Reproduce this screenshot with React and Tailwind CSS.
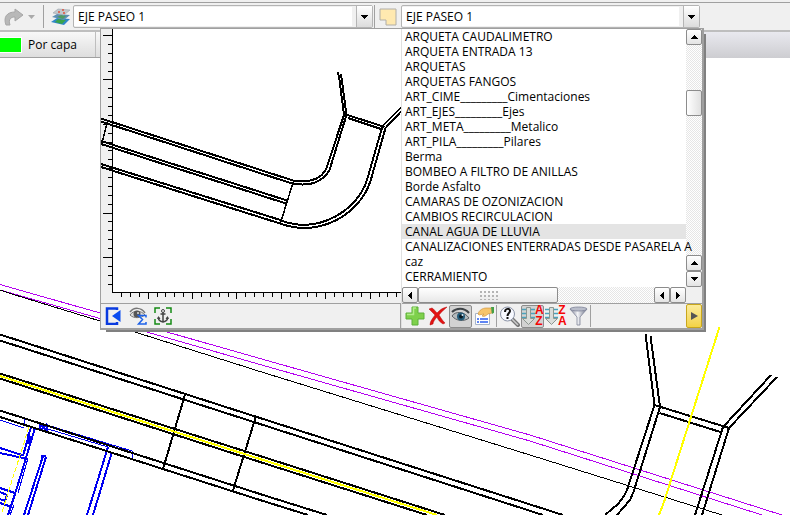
import { useState } from "react";

const LAYERS = [
  "ARQUETA CAUDALIMETRO",
  "ARQUETA ENTRADA 13",
  "ARQUETAS",
  "ARQUETAS FANGOS",
  "ART_CIME_________Cimentaciones",
  "ART_EJES_________Ejes",
  "ART_META_________Metalico",
  "ART_PILA_________Pilares",
  "Berma",
  "BOMBEO A FILTRO DE ANILLAS",
  "Borde Asfalto",
  "CAMARAS DE OZONIZACION",
  "CAMBIOS RECIRCULACION",
  "CANAL AGUA DE LLUVIA",
  "CANALIZACIONES ENTERRADAS DESDE PASARELA A",
  "caz",
  "CERRAMIENTO",
];

const V_TICKS = Array.from({ length: 29 }, (_, i) => ({ at: Math.round(35 + i * 8.88), major: i % 5 === 0 }));
const H_TICKS = Array.from({ length: 32 }, (_, i) => ({ at: Math.round(121 + i * 8.88), major: i % 5 === 3 }));

/* ===== ICONS ===== */
function Arrow({ dir }) {
  const d = {
    up: "M3 0h1v1h1v1h1v1h1v1H0V3h1V2h1V1h1z",
    down: "M0 0h7v1H6v1H5v1H4v1H3V3H2V2H1V1H0z",
    left: "M0 3h1V2h1V1h1V0h1v7H3V6H2V5H1V4H0z",
    right: "M0 0h1v1h1v1h1v1h1v1H3v1H2v1H1v1H0z",
  }[dir];
  const flat = dir === "up" || dir === "down";
  return (
    <svg width={flat ? 7 : 4} height={flat ? 4 : 7} shapeRendering="crispEdges" aria-hidden="true">
      <path d={d} />
    </svg>
  );
}

function RedoIcon() {
  return (
    <svg width="20" height="18" aria-hidden="true">
      <path d="M2 17C-1 9 3 4 11 4V1l8 6-8 6V9C7 9 4 11 6 17z" fill="#b8b8b8" stroke="#a6a6a6" />
    </svg>
  );
}

function LayersIcon() {
  return (
    <svg width="20" height="18" aria-hidden="true">
      <path d="M0 14l6-4 13 1-6 6z" fill="#2e86c8" />
      <path d="M4 14l3-3 8 1-4 4z" fill="#3aa34a" />
      <path d="M1 9l5-3 13 1-6 5z" fill="#5d8fb4" />
      <path d="M6 9l4-2 5 1-3 3z" fill="#4e9c62" />
      <path d="M2 5l5-4 12 1-6 5z" fill="#c2c7cc" stroke="#9aa4ad" strokeWidth=".6" />
      <path d="M7 4h2M11 2h2M12 5h2" stroke="#e0523c" strokeWidth="1.5" />
    </svg>
  );
}

function LayerShapeIcon() {
  return (
    <svg width="18" height="18" aria-hidden="true">
      <path d="M1 1h16v16H7v-5H1z" fill="#ffe9b0" stroke="#b0aea8" />
    </svg>
  );
}

function DockIcon() {
  return (
    <svg width="17" height="18" aria-hidden="true">
      <path d="M12 3V1.500H2v15.500h10v-2" fill="none" stroke="#0a3be0" strokeWidth="2.500" />
      <path d="M15.500 3v12L7 9z" fill="#0a4cf0" />
    </svg>
  );
}

function EyeSumIcon() {
  return (
    <svg width="18" height="18" aria-hidden="true">
      <path d="M1 5C5 0 12 0 16 6" fill="none" stroke="#777" strokeWidth="1.500" />
      <path d="M1 8C4 3 12 3 16 8C12 11 5 12 1 8z" fill="#ddd" stroke="#777" />
      <circle cx="8" cy="7" r="3.500" fill="#555" />
      <circle cx="9" cy="6" r="1" fill="#ddd" />
      <path d="M17 10.500V8.500H9.500l4 4-4 4.500H17v-2" fill="none" stroke="#1d62e8" strokeWidth="1.500" />
    </svg>
  );
}

function AnchorIcon() {
  return (
    <svg width="18" height="18" aria-hidden="true">
      <path d="M6 1H1v5M12 1h5v5M6 17H1v-5M12 17h5v-5" fill="none" stroke="#158a15" strokeWidth="1.500" />
      <circle cx="9" cy="4" r="1.500" fill="none" stroke="#444" />
      <path d="M9 5.500V15M6.500 7h5M4.500 10v1c0 2 2 3.500 4.500 4 2.500-.5 4.500-2 4.500-4v-1" fill="none" stroke="#444" strokeWidth="1.500" />
      <path d="M3 12l1.500-3 2 3zM11.500 12l2-3 1.500 3z" fill="#444" />
    </svg>
  );
}

function PlusIcon() {
  return (
    <svg width="20" height="20" aria-hidden="true">
      <path d="M7 1h6v6h6v6h-6v6H7v-6H1V7h6z" fill="#7ed04b" stroke="#5cb03a" strokeLinejoin="round" />
      <path d="M2 8.500h6.500V2H11" fill="none" stroke="#b2ec8b" strokeWidth="1.500" />
    </svg>
  );
}

function CrossIcon() {
  return (
    <svg width="20" height="20" aria-hidden="true">
      <path d="M1 3l3-1c2 1 3 3 5 5 3-3 5-5 10-6-3 3-6 5-8 8 2 3 3 5 6 8l-2 1c-3-2-5-4-6-7-2 2-4 5-4 7l-3 1c0-4 3-7 5-10C5 7 3 5 1 3z" fill="#e31212" stroke="#b00808" strokeWidth=".5" />
    </svg>
  );
}

function EyeIcon() {
  return (
    <svg width="19" height="18" aria-hidden="true">
      <path d="M1 5C5 1 13 0 18 6" fill="none" stroke="#3e4347" strokeWidth="2" />
      <path d="M1 9C4 4 13 4 18 11C13 15 5 14 1 9z" fill="#b4babd" stroke="#5b6064" />
      <circle cx="10" cy="9.500" r="4" fill="#235a78" />
      <circle cx="10" cy="9.500" r="2" fill="#0b1820" />
      <circle cx="11.500" cy="8" r="1" fill="#d8eaf4" />
    </svg>
  );
}

function PropertiesIcon() {
  return (
    <svg width="22" height="20" aria-hidden="true">
      <path d="M2.500 7.500h14v11h-14z" fill="#fff" stroke="#a7b4c8" />
      <path d="M4 13h2M4 16h2M7 13h8M7 16h8" stroke="#2b5df0" strokeWidth="1.500" />
      <path d="M5 8c1-4 5-6 8-6l5 0 1 5-4 1c-2 2-4 3-6 2l2-2-5 1z" fill="#f6c56c" stroke="#c98f3a" strokeWidth=".6" />
      <path d="M18 1l3 0 1 5-3 2z" fill="#46a046" />
    </svg>
  );
}

function FindIcon() {
  return (
    <svg width="22" height="21" aria-hidden="true">
      <path d="M13 13l6 6" stroke="#777" strokeWidth="4" strokeLinecap="round" />
      <path d="M13 13l6 6" stroke="#ccc" strokeWidth="1.500" />
      <circle cx="8.500" cy="8" r="7" fill="#f7f9ff" stroke="#8b93a6" />
      <path d="M6 6c0-4 5-4 5-1 0 2-2.500 2-2.500 5" fill="none" stroke="#111" strokeWidth="2" />
      <path d="M7.500 11h2v2h-2z" fill="#111" />
    </svg>
  );
}

function SortIcon({ top, bottom }) {
  return (
    <span className="flex h-5 items-center">
      <svg width="13" height="20" aria-hidden="true">
        <path d="M0 3.500h13M0 7.500h13M0 11.500h13" stroke="#4aa3bd" strokeWidth="1.500" />
        <path d="M4.500 1.500h4v11h4l-6 6-6-6h4z" fill="#d9dcd9" stroke="#8d9690" />
      </svg>
      <span className="flex w-2 flex-col font-['Liberation_Sans',sans-serif] text-[12px] leading-[11px] font-bold text-[#f50505]">
        <span>{top}</span>
        <span>{bottom}</span>
      </span>
    </span>
  );
}

function FilterIcon() {
  return (
    <svg width="20" height="20" aria-hidden="true">
      <defs>
        <linearGradient id="steel">
          <stop offset="0" stopColor="#777c90" />
          <stop offset=".45" stopColor="#f4f5f8" />
          <stop offset="1" stopColor="#686e84" />
        </linearGradient>
      </defs>
      <path d="M1 3l7 8v8h3v-8l7-8z" fill="url(#steel)" stroke="#7d8398" strokeWidth=".8" />
      <ellipse cx="9.500" cy="3" rx="8.500" ry="2" fill="#b9bdca" stroke="#7d8398" strokeWidth=".8" />
    </svg>
  );
}

/* ===== DRAWINGS ===== */
function PlanDrawing() {
  return (
    <svg className="absolute inset-0 h-full w-full" fill="none" shapeRendering="crispEdges" aria-hidden="true">
      <g stroke="#b400f0">
        <path d="M0 284.500L260 358.500L530 435L782 515" />
        <path d="M0 290L100 318.500L260 364.500L530 441L762 515" />
      </g>
      <path d="M0 290L20 296.500L100 321L260 371.500L530 455L722 515" stroke="#000" />

      <g stroke="#0000f0">
        <path d="M0 420L24 428M24 424v-6l108 33v7M48 429L108 447M28 458L18 493M14 505l-4 10" />
        <path strokeWidth="2" d="M31 427L23 456M35 428L26 458L15 494L8 515M31 436l-5 8 5-3M27 434l4 9M0 448L22 455M0 453L28 459M40 424l7 7M47 424l-7 7M40 425v6M47 425v6" />
        <path strokeWidth="2" d="M41 456h5M43 456L24 515M46 457L28 515M108 447L87 515M112 452L93 515" />
        <path strokeWidth="2" d="M0 488L15 493M0 492L7 495L5 501L0 499M0 503L12 507" />
      </g>
      <path d="M29 427L2 512" stroke="#ff0" strokeDasharray="5 2" />

      <g stroke="#000" strokeWidth="2">
        <path d="M0 334.500L260 418L563 515M0 340.500L260 424L543 515" />
        <path d="M0 373.500L260 456L445 515M0 378.500L260 462L427 515" />
        <path d="M0 410.500L260 494L327 515M0 417L260 500L308 515" />
        <path d="M185.500 393L163 469M256 416L232.500 492" />
        <path d="M645.500 334L654.500 405L627 490L624 496L618 504L605 515" />
        <path d="M650.500 336L660 407L633.500 492L630 500L617 515" />
        <path d="M654.500 405L729 428M659.500 413L722 432.500" />
        <path d="M771 375L723 427L695 515M777 377L729 428L702 515" />
      </g>
      <path d="M0 376L260 459L437 515M719.500 327L664 502L659 515" stroke="#ff0" strokeWidth="2" />
    </svg>
  );
}

function PreviewDrawing() {
  return (
    <svg className="block h-[274px] w-full" shapeRendering="crispEdges" fill="none" role="img" aria-label="Vista previa">
      <g transform="translate(-101 -29)">
        <path d="M101 29h11v274h-11z" fill="#f0f0f0" />
        <path d="M112 293h300v10H112z" fill="#f0f0f0" />
        <g stroke="#000" strokeWidth="2">
          <path d="M101 118.500L293 180.500M101 121.500L292 183.500" />
          <path d="M101 141L287 200.500M101 144L286 203.500" />
          <path d="M101 164L282 220.500M101 167L280 223.500" />
          <path d="M338 72L339.500 80L344 115L326.500 168C322 178 313 183 293 180.500" />
          <path d="M341 74L346.500 115L329.500 170C323 181 311 187 292 183.500" />
          <path d="M346 114.500L384.500 127M348 118L382.500 129.500" />
          <path d="M401 107.500L382.500 126L367 180C358 209 320 235 281 220.500" />
          <path d="M401 111.500L385.500 128L370.500 181C360 214 320 238 280 223.500" />
        </g>
        <path d="M293.500 181L280.500 223M107.500 121L101.500 145" stroke="#000" strokeWidth="1.500" />
        <path d="M112.500 29V292.500H401" stroke="#000" />
        {V_TICKS.map((t) => (
          <path key={t.at} d={`M112 ${t.at + 0.5}h${t.major ? -9 : -4}`} stroke="#000" />
        ))}
        {H_TICKS.map((t) => (
          <path key={t.at} d={`M${t.at + 0.5} 293v${t.major ? 6 : 4}`} stroke="#000" />
        ))}
      </g>
    </svg>
  );
}

/* ===== CONTROLS ===== */
function Combo({ label, value, className }) {
  return (
    <div className={`relative flex h-[23px] rounded-xs border border-[#b4b4b4] bg-[#f0f0f0] ${className}`}>
      <select
        aria-label={label}
        defaultValue={value}
        className="my-px min-w-0 flex-1 appearance-none border-r-4 border-[#f0f0f0] bg-white px-1 outline-none"
      >
        <option>{value}</option>
      </select>
      <span className="pointer-events-none flex w-4 items-center justify-center border-l border-[#b4b4b4] bg-linear-to-b from-white to-[#dcdcdc]">
        <Arrow dir="down" />
      </span>
    </div>
  );
}

function ScrollButton({ dir, label }) {
  return (
    <button
      aria-label={label}
      className="flex size-4 shrink-0 items-center justify-center rounded-xs border border-[#8c8c8c] bg-linear-to-b from-white to-[#e4e4e4]"
    >
      <Arrow dir={dir} />
    </button>
  );
}

function ToolButton({ label, pressed, children }) {
  return (
    <button
      aria-label={label}
      className={`flex h-[23px] w-[23px] shrink-0 items-center justify-center rounded-xs border ${
        pressed ? "border-[#8c8c8c] bg-[#d2d2d2]" : "border-transparent"
      }`}
    >
      {children}
    </button>
  );
}

function LayerPopup() {
  const [selected, setSelected] = useState("CANAL AGUA DE LLUVIA");

  return (
    <div className="absolute top-7 left-[100px] flex w-[604px] border-t border-r-2 border-b-2 border-l border-[#a0a0a0] bg-white shadow-[4px_4px_0_-2px_#808080]">
      {/* preview side */}
      <div className="flex w-[300px] shrink-0 flex-col">
        <PreviewDrawing />
        <div className="flex flex-1 items-center gap-[7px] border-t border-r border-[#a0a0a0] bg-[#f0f0f0] pl-1">
          <button aria-label="Acoplar"><DockIcon /></button>
          <button aria-label="Ver todo"><EyeSumIcon /></button>
          <button aria-label="Anclar"><AnchorIcon /></button>
        </div>
      </div>

      {/* list side */}
      <div className="flex min-w-0 flex-1 flex-col border-l border-[#e0e0e0]">
        <div className="flex">
          <div className="flex min-w-0 flex-1 flex-col">
            <ul role="listbox" aria-label="Capas" className="relative z-10 h-[258px] shrink-0">
              {LAYERS.map((name) => (
                <li
                  key={name}
                  role="option"
                  aria-selected={name === selected}
                  onClick={() => setSelected(name)}
                  className={`h-[15px] pl-[3px] leading-[15px] whitespace-nowrap ${
                    name === selected ? "bg-[#e4e4e4]" : ""
                  }`}
                >
                  {name}
                </li>
              ))}
            </ul>
            <div className="flex h-4 bg-[repeating-conic-gradient(#e6e6e6_0_25%,#fff_0_50%)] bg-[length:2px_2px]">
              <ScrollButton dir="left" label="Izquierda" />
              <div className="flex h-4 w-[140px] items-center justify-center rounded-xs border border-[#8c8c8c] bg-linear-to-b from-white to-[#e8e8e8]">
                <span className="h-[10px] w-[19px] bg-[radial-gradient(#b4b4b4_1px,transparent_1px)] bg-[length:4px_4px]" />
              </div>
              <div className="flex-1" />
              <ScrollButton dir="left" label="Izquierda" />
              <ScrollButton dir="right" label="Derecha" />
            </div>
          </div>
          <div className="flex w-4 shrink-0 flex-col bg-[repeating-conic-gradient(#e6e6e6_0_25%,#fff_0_50%)] bg-[length:2px_2px]">
            <ScrollButton dir="up" label="Arriba" />
            <div className="h-[45px]" />
            <div className="h-[26px] rounded-xs border border-[#8c8c8c] bg-linear-to-r from-white to-[#e0e0e0]" />
            <div className="flex-1" />
            <ScrollButton dir="up" label="Arriba" />
            <ScrollButton dir="down" label="Abajo" />
            <div className="h-4 bg-[#f0f0f0]" />
          </div>
        </div>
        <div className="flex h-[25px] items-center border-t border-[#a0a0a0] bg-[#f0f0f0] pl-px">
          <ToolButton label="Nueva capa"><PlusIcon /></ToolButton>
          <ToolButton label="Eliminar capa"><CrossIcon /></ToolButton>
          <ToolButton label="Ver activas" pressed><EyeIcon /></ToolButton>
          <ToolButton label="Propiedades"><PropertiesIcon /></ToolButton>
          <div className="mx-px h-[22px] w-px bg-[#a0a0a0]" />
          <ToolButton label="Buscar"><FindIcon /></ToolButton>
          <ToolButton label="Orden ascendente" pressed><SortIcon top="A" bottom="Z" /></ToolButton>
          <ToolButton label="Orden descendente"><SortIcon top="Z" bottom="A" /></ToolButton>
          <ToolButton label="Filtrar"><FilterIcon /></ToolButton>
          <div className="h-[22px] w-px bg-[#a0a0a0]" />
          <button
            aria-label="Más"
            className="ml-auto flex h-6 w-4 items-center justify-center rounded-xs border border-[#c8a61c] bg-linear-to-b from-[#fbeb9a] to-[#f3d343]"
          >
            <svg width="7" height="8" aria-hidden="true"><path d="M0 0l7 4-7 4z" fill="#555" /></svg>
          </button>
        </div>
      </div>
    </div>
  );
}

export default function App() {
  return (
    <main className="relative flex min-h-screen flex-col overflow-hidden bg-white font-['Open_Sans','Noto_Sans',sans-serif] text-[12px] text-black">
      <PlanDrawing />

      {/* ===== TOOLBARS ===== */}
      <div className="relative h-[3px] border-b border-[#a0a0a0] bg-[#f0f0f0]" />
      <div className="relative flex h-[29px] items-start border-b-2 border-[#bebebe] bg-[#f0f0f0] pt-[2px] pl-1">
        <button aria-label="Rehacer" className="flex h-[23px] w-[39px] items-center gap-1">
          <RedoIcon />
          <svg width="7" height="4" aria-hidden="true"><path d="M0 0h7L3.500 4z" fill="#aaa" /></svg>
        </button>
        <div className="h-[23px] w-px bg-[#a0a0a0]" />
        <button aria-label="Capas" className="flex h-[23px] w-[29px] items-center justify-center pl-1"><LayersIcon /></button>
        <Combo label="Capa activa" value="EJE PASEO 1" className="w-[300px]" />
        <div className="ml-px h-[23px] w-px bg-[#a0a0a0]" />
        <button aria-label="Capa" className="flex h-[23px] w-[26px] items-center justify-center"><LayerShapeIcon /></button>
        <Combo label="Buscar capa" value="EJE PASEO 1" className="w-[299px]" />
      </div>
      <div className="relative flex h-[26px] bg-linear-to-b from-[#e9e9ef] to-[#cdcdd1]">
        <div className="flex w-[104px] border-b border-[#a0a0a0] bg-linear-to-b from-[#f8f8f8] to-[#dedede]">
          <button className="flex w-24 items-center border-r border-[#bebebe]">
            <span className="h-4 w-[22px] border-y border-r border-white bg-[#00ff00]" />
            <span className="pl-1.5">Por capa</span>
          </button>
        </div>
      </div>

      <LayerPopup />
    </main>
  );
}
